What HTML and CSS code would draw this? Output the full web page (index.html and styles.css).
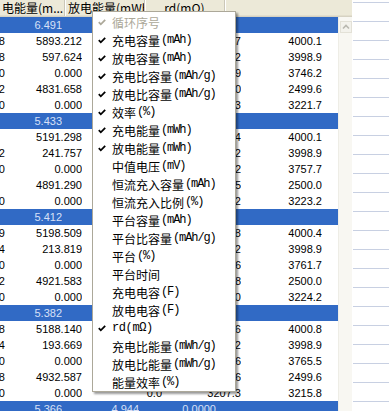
FILE: index.html
```html
<html>
<head>
    <title>cycle list</title>
    <meta charset="UTF-8">
    <link rel="stylesheet" href="styles.css">
</head>
<body>
<div class="app">
    <div class="list">
        <div class="head">
            <div class="h h0">电能量(m...</div>
            <div class="h h1">放电能量(mWh)</div>
            <div class="h h2">rd(mΩ)</div>
            <div class="h h3"></div>
        </div>
        <div class="body">
            <div class="rows">
                <!--group 1-->
                <div class="row grp"><span class="g1">6.491</span><span class="g2">5.108</span><span class="g3">0.0000</span></div>
                <div class="row"><span class="c0">18</span><span class="c1">5893.212</span><span class="c2">5312.458</span><span class="c3">1021.7</span><span class="c4">4000.1</span></div>
                <div class="row"><span class="c0">18</span><span class="c1">597.624</span><span class="c2">541.902</span><span class="c3">96.2</span><span class="c4">3998.9</span></div>
                <div class="row"><span class="c0">10</span><span class="c1">0.000</span><span class="c2">0.000</span><span class="c3">1187.9</span><span class="c4">3746.2</span></div>
                <div class="row"><span class="c0">12</span><span class="c1">4831.658</span><span class="c2">4419.532</span><span class="c3">804.0</span><span class="c4">2499.6</span></div>
                <div class="row"><span class="c0">10</span><span class="c1">0.000</span><span class="c2">0.000</span><span class="c3">1003.3</span><span class="c4">3221.7</span></div>
                <!--group 2-->
                <div class="row grp"><span class="g1">5.433</span><span class="g2">4.986</span><span class="g3">0.0000</span></div>
                <div class="row"><span class="c0"></span><span class="c1">5191.298</span><span class="c2">4702.115</span><span class="c3">1024.4</span><span class="c4">4000.1</span></div>
                <div class="row"><span class="c0">12</span><span class="c1">241.757</span><span class="c2">220.381</span><span class="c3">98.2</span><span class="c4">3998.9</span></div>
                <div class="row"><span class="c0">10</span><span class="c1">0.000</span><span class="c2">0.000</span><span class="c3">1192.2</span><span class="c4">3757.7</span></div>
                <div class="row"><span class="c0"></span><span class="c1">4891.290</span><span class="c2">4450.734</span><span class="c3">806.5</span><span class="c4">2500.0</span></div>
                <div class="row"><span class="c0">10</span><span class="c1">0.000</span><span class="c2">0.000</span><span class="c3">1005.2</span><span class="c4">3223.2</span></div>
                <!--group 3-->
                <div class="row grp"><span class="g1">5.412</span><span class="g2">4.962</span><span class="g3">0.0000</span></div>
                <div class="row"><span class="c0">19</span><span class="c1">5198.509</span><span class="c2">4711.063</span><span class="c3">1025.8</span><span class="c4">4000.4</span></div>
                <div class="row"><span class="c0">14</span><span class="c1">213.819</span><span class="c2">195.227</span><span class="c3">98.2</span><span class="c4">3998.9</span></div>
                <div class="row"><span class="c0">10</span><span class="c1">0.000</span><span class="c2">0.000</span><span class="c3">1194.6</span><span class="c4">3761.7</span></div>
                <div class="row"><span class="c0">12</span><span class="c1">4921.583</span><span class="c2">4478.921</span><span class="c3">807.8</span><span class="c4">2500.0</span></div>
                <div class="row"><span class="c0">10</span><span class="c1">0.000</span><span class="c2">0.000</span><span class="c3">1006.0</span><span class="c4">3224.2</span></div>
                <!--group 4-->
                <div class="row grp"><span class="g1">5.382</span><span class="g2">4.951</span><span class="g3">0.0000</span></div>
                <div class="row"><span class="c0">18</span><span class="c1">5188.140</span><span class="c2">4706.384</span><span class="c3">1026.6</span><span class="c4">4000.8</span></div>
                <div class="row"><span class="c0">14</span><span class="c1">193.669</span><span class="c2">177.045</span><span class="c3">98.2</span><span class="c4">3998.9</span></div>
                <div class="row"><span class="c0">10</span><span class="c1">0.000</span><span class="c2">0.000</span><span class="c3">1196.6</span><span class="c4">3765.5</span></div>
                <div class="row"><span class="c0">18</span><span class="c1">4932.587</span><span class="c2">4490.612</span><span class="c3">808.6</span><span class="c4">2499.6</span></div>
                <div class="row"><span class="c0">10</span><span class="c1">0.000</span><span class="c2">0.0</span><span class="c3">3207.3</span><span class="c4">3215.8</span></div>
                <!--group 5-->
                <div class="row grp"><span class="g1">5.366</span><span class="g2">4.944</span><span class="g3">0.0000</span></div>
            </div>
            <div class="vscroll">
                <div class="up">
                    <svg width="10" height="10" viewBox="0 0 10 10"><polyline points="2,6.5 5,3.5 8,6.5" fill="none" stroke="#b9b8b0" stroke-width="1.6"/></svg>
                </div>
            </div>
        </div>
    </div>
    <div class="side"></div>

    <!--column chooser popup-->
    <div class="menu">
        <div class="item off"><span class="chk"><svg width="8" height="7" viewBox="0 0 8 7"><polyline points="0.8,3.2 2.8,5.3 7.2,0.9" fill="none" stroke="#aca899" stroke-width="1.8"/></svg></span>循环序号</div>
        <div class="item"><span class="chk"><svg width="8" height="7" viewBox="0 0 8 7"><polyline points="0.8,3.2 2.8,5.3 7.2,0.9" fill="none" stroke="#000" stroke-width="1.8"/></svg></span>充电容量<span class="lat">(mAh)</span></div>
        <div class="item"><span class="chk"><svg width="8" height="7" viewBox="0 0 8 7"><polyline points="0.8,3.2 2.8,5.3 7.2,0.9" fill="none" stroke="#000" stroke-width="1.8"/></svg></span>放电容量<span class="lat">(mAh)</span></div>
        <div class="item"><span class="chk"><svg width="8" height="7" viewBox="0 0 8 7"><polyline points="0.8,3.2 2.8,5.3 7.2,0.9" fill="none" stroke="#000" stroke-width="1.8"/></svg></span>充电比容量<span class="lat">(mAh/g)</span></div>
        <div class="item"><span class="chk"><svg width="8" height="7" viewBox="0 0 8 7"><polyline points="0.8,3.2 2.8,5.3 7.2,0.9" fill="none" stroke="#000" stroke-width="1.8"/></svg></span>放电比容量<span class="lat">(mAh/g)</span></div>
        <div class="item"><span class="chk"><svg width="8" height="7" viewBox="0 0 8 7"><polyline points="0.8,3.2 2.8,5.3 7.2,0.9" fill="none" stroke="#000" stroke-width="1.8"/></svg></span>效率<span class="lat">(%)</span></div>
        <div class="item"><span class="chk"><svg width="8" height="7" viewBox="0 0 8 7"><polyline points="0.8,3.2 2.8,5.3 7.2,0.9" fill="none" stroke="#000" stroke-width="1.8"/></svg></span>充电能量<span class="lat">(mWh)</span></div>
        <div class="item"><span class="chk"><svg width="8" height="7" viewBox="0 0 8 7"><polyline points="0.8,3.2 2.8,5.3 7.2,0.9" fill="none" stroke="#000" stroke-width="1.8"/></svg></span>放电能量<span class="lat">(mWh)</span></div>
        <div class="item"><span class="chk"></span>中值电压<span class="lat">(mV)</span></div>
        <div class="item"><span class="chk"></span>恒流充入容量<span class="lat">(mAh)</span></div>
        <div class="item"><span class="chk"></span>恒流充入比例<span class="lat">(%)</span></div>
        <div class="item"><span class="chk"></span>平台容量<span class="lat">(mAh)</span></div>
        <div class="item"><span class="chk"></span>平台比容量<span class="lat">(mAh/g)</span></div>
        <div class="item"><span class="chk"></span>平台<span class="lat">(%)</span></div>
        <div class="item"><span class="chk"></span>平台时间</div>
        <div class="item"><span class="chk"></span>充电电容<span class="lat">(F)</span></div>
        <div class="item"><span class="chk"></span>放电电容<span class="lat">(F)</span></div>
        <div class="item"><span class="chk"><svg width="8" height="7" viewBox="0 0 8 7"><polyline points="0.8,3.2 2.8,5.3 7.2,0.9" fill="none" stroke="#000" stroke-width="1.8"/></svg></span><span class="lat rd">rd(mΩ)</span></div>
        <div class="item"><span class="chk"></span>充电比能量<span class="lat">(mWh/g)</span></div>
        <div class="item"><span class="chk"></span>放电比能量<span class="lat">(mWh/g)</span></div>
        <div class="item"><span class="chk"></span>能量效率<span class="lat">(%)</span></div>
    </div>
</div>
</body>
</html>
```

FILE: styles.css
```css
body{
    margin:0;
    padding:0;
    background:#fff;
}
.app{
    position: relative;
    display: flex;
    width: 389px;
    height: 411px;
    overflow: hidden;
}

/* list view */
.list{
    width: 352px;
    display: flex;
    flex-direction: column;
}
.head{
    display: flex;
    height: 17px;
    box-sizing: border-box;
    background: #ece9d8;
    border-bottom: 1px solid #d6d2c2;
    box-shadow: inset 0 -1px #e2decd;
    font-family: "Noto Sans CJK SC", sans-serif;
    font-size: 12px;
    line-height: 15px;
    color: #000;
    white-space: nowrap;
}
.h{
    flex: none;
    overflow: hidden;
    box-sizing: border-box;
    border-right: 1px solid #cbc7b8;
    box-shadow: 1px 0 #fff;
}
.h0{ width: 65px; padding-left: 2px; }
.h1{ width: 80px; padding-left: 3px; }
.h2{ width: 80px; text-align: center; }
.h3{ flex: 1; border-right: none; box-shadow: none; }

.body{
    flex: 1;
    display: flex;
    overflow: hidden;
}
.rows{
    width: 338px;
}
.row{
    display: flex;
    height: 16px;
    line-height: 16px;
    font-family: "Liberation Sans", Arial, sans-serif;
    font-size: 11px;
    color: #000;
    white-space: nowrap;
}
.row span{
    flex: none;
    overflow: hidden;
    text-align: right;
}
.c0{
    width: 5px;
    display: flex;
    justify-content: flex-end;
}
.c1{ width: 77px; }
.c2{ width: 80px; }
.c3{ width: 79px; }
.c4{ width: 81px; }

.grp{
    background: #316ac5;
    color: #d7e0f7;
}
.g1{ width: 62px; }
.g2{ width: 77px; }
.g3{ width: 77px; }

.vscroll{
    width: 14px;
    background: #f8f7f2;
    border-left: 1px solid #eeede6;
    box-sizing: border-box;
}
.up{
    width: 12px;
    height: 12px;
    margin: 4px 0 0 1px;
    box-sizing: border-box;
    background: #f3f2ec;
    border: 1px solid #e3e1d7;
    display: flex;
    align-items: center;
    justify-content: center;
}

/* note area on the right */
.side{
    flex: 1;
    margin-left: 1px;
    background: repeating-linear-gradient(to bottom, #fff 0, #fff 2px, #c8d0e2 2px, #c8d0e2 3px, #fff 3px, #fff 19px);
}

/* popup menu */
.menu{
    position: absolute;
    left: 92px;
    top: 11px;
    width: 144px;
    box-sizing: border-box;
    padding-top: 1px;
    background: #fff;
    border: 1px solid #aca899;
    box-shadow: 2px 2px 2px rgba(0,0,0,0.4);
    font-family: "Noto Sans CJK SC", sans-serif;
    font-size: 12px;
    color: #000;
}
.item{
    display: flex;
    align-items: center;
    height: 18px;
    white-space: nowrap;
}
.item.off{
    color: #aca899;
}
.chk{
    width: 8px;
    height: 7px;
    margin-left: 5px;
    margin-right: 6px;
    display: flex;
}
.lat{
    margin-left: 1px;
    font-family: "Liberation Mono", monospace;
    font-size: 12px;
    letter-spacing: -1.1px;
}
.lat.rd{
    margin-left: 0;
    letter-spacing: -0.4px;
}
```
